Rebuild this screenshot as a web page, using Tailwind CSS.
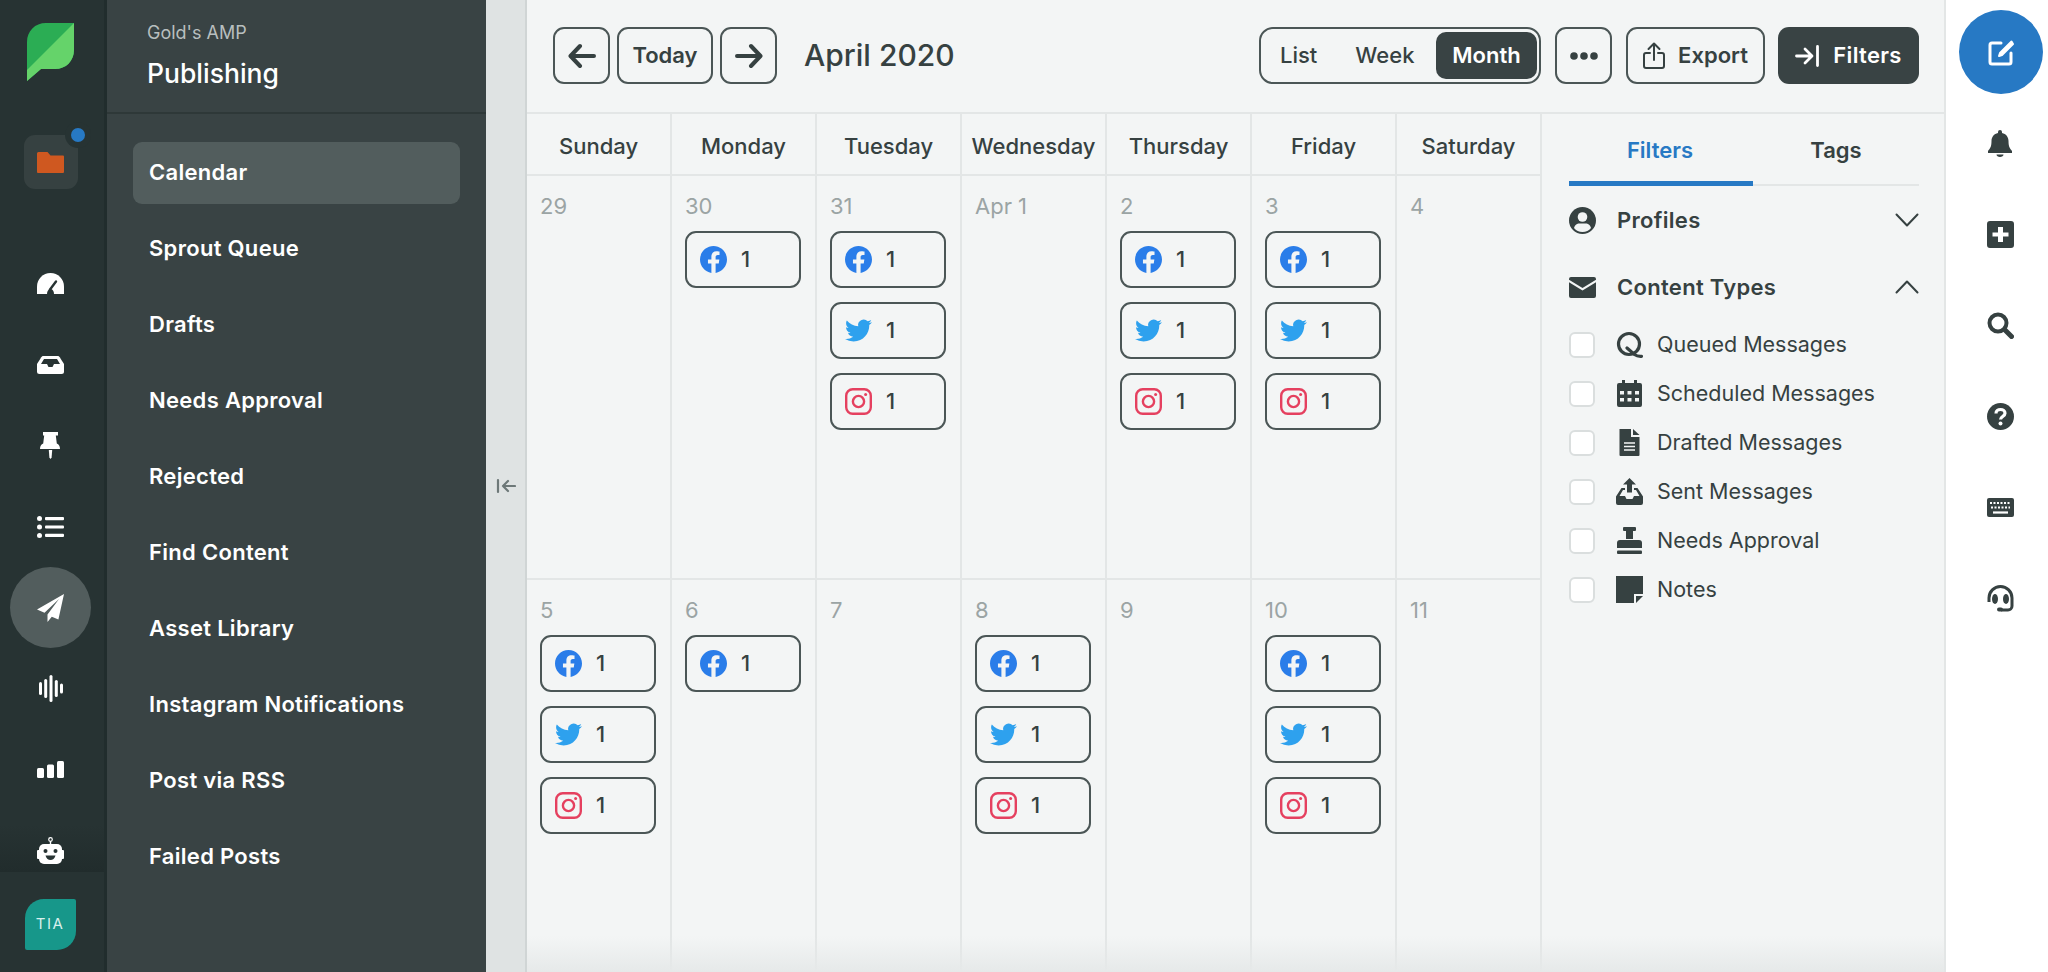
<!DOCTYPE html>
<html>
<head>
<meta charset="utf-8">
<title>Publishing</title>
<script src="https://cdn.jsdelivr.net/npm/@tailwindcss/browser@4"></script>
</head>
<body class="font-['Inter',sans-serif]">

<!-- shared icons -->
<svg class="hidden">
  <symbol id="fb" viewBox="0 0 24 24"><path fill="#2a7de9" d="M24 12.073c0-6.627-5.373-12-12-12s-12 5.373-12 12c0 5.99 4.388 10.954 10.125 11.854v-8.385H7.078v-3.47h3.047V9.43c0-3.007 1.792-4.669 4.533-4.669 1.312 0 2.686.235 2.686.235v2.953H15.83c-1.491 0-1.956.925-1.956 1.874v2.25h3.328l-.532 3.47h-2.796v8.385C19.612 23.027 24 18.062 24 12.073z"/></symbol>
  <symbol id="tw" viewBox="0 0 24 24"><path fill="#2ea1ee" d="M23.953 4.57a10 10 0 01-2.825.775 4.958 4.958 0 002.163-2.723c-.951.555-2.005.959-3.127 1.184a4.92 4.92 0 00-8.384 4.482C7.69 8.095 4.067 6.13 1.64 3.162a4.822 4.822 0 00-.666 2.475c0 1.71.87 3.213 2.188 4.096a4.904 4.904 0 01-2.228-.616v.06a4.923 4.923 0 003.946 4.827 4.996 4.996 0 01-2.212.085 4.936 4.936 0 004.604 3.417 9.867 9.867 0 01-6.102 2.105c-.39 0-.779-.023-1.17-.067a13.995 13.995 0 007.557 2.209c9.053 0 13.998-7.496 13.998-13.985 0-.21 0-.42-.015-.63A9.935 9.935 0 0024 4.59z"/></symbol>
  <symbol id="ig" viewBox="0 0 27 27"><rect x="1.2" y="1.2" width="24.6" height="24.6" rx="6.5" fill="none" stroke="#e5405f" stroke-width="2.4"/><circle cx="13.5" cy="13.5" r="5.6" fill="none" stroke="#e5405f" stroke-width="2.4"/><circle cx="20.6" cy="6.4" r="1.5" fill="#e5405f"/></symbol>
</svg>

<div class="flex h-[972px] w-[2048px] overflow-hidden bg-[#f3f5f5] text-[#364141]">

  <!-- Icon rail -->
  <div class="relative flex h-full w-[107px] shrink-0 flex-col items-center border-r-[3px] border-[#212d2d] bg-[#273333] pr-[3px]">
    <svg class="mt-[23px] h-[58px] w-[47px]" viewBox="0 0 47 58">
      <path fill="#2bad54" d="M47 0H19C8 0 0 8 0 19v39l14-12h14c11 0 19-8 19-19z"/>
      <path fill="#65d36a" d="M47 0v27c0 11-8 19-19 19H14L0 58V47z"/>
    </svg>
    <div class="relative mt-[54px] flex h-[54px] w-[54px] items-center justify-center rounded-[11px] bg-[#364141]">
      <svg class="h-[21px] w-[27px]" viewBox="0 0 27 21"><path fill="#cf5820" d="M0 1.5A1.5 1.5 0 0 1 1.5 0h9l3 3.5H26A1 1 0 0 1 27 4.500V20a1 1 0 0 1-1 1H1a1 1 0 0 1-1-1z"/></svg>
      <span class="absolute right-[-7px] top-[-7px] h-[14px] w-[14px] rounded-full bg-[#2779c4] ring-[6px] ring-[#273333]"></span>
    </div>

    <div class="mt-[54px] flex w-full flex-col items-center">
      <div class="flex h-[81px] items-center justify-center">
        <svg class="h-[21px] w-[27px]" viewBox="0 0 27 21"><path fill="#fff" d="M0 21v-7.500C0 6 6 0 13.500 0S27 6 27 13.500V21z"/><path stroke="#273333" stroke-width="2.400" stroke-linecap="round" d="M13 16.500 19 8.500"/><path fill="#273333" d="M10 21c0-3 1.500-5 3.500-5s3.500 2 3.500 5z"/></svg>
      </div>
      <div class="flex h-[81px] items-center justify-center">
        <svg class="h-[18px] w-[27px]" viewBox="0 0 27 18"><path fill="#fff" d="M6.500 0h14c1 0 1.600.4 2.200 1.200L27 8v7.500a2.500 2.500 0 0 1-2.500 2.500h-22A2.500 2.500 0 0 1 0 15.500V8l4.300-6.800C4.900.4 5.500 0 6.500 0z"/><path fill="#273333" d="M7 3h13l3 5h-6l-1.500 3h-4L10 8H4z"/></svg>
      </div>
      <div class="flex h-[81px] items-center justify-center">
        <svg class="h-[27px] w-[21px]" viewBox="0 0 21 27"><path fill="#fff" d="M3 0h15v3.500h-2.200l1 8c2 1 3.200 2.500 3.200 5.500H0c0-3 1.200-4.500 3.200-5.500l1-8H3z"/><path fill="#fff" d="M8.800 18h3.400l-.6 7.500-1.100 1.500-1.100-1.500z"/></svg>
      </div>
      <div class="flex h-[81px] items-center justify-center">
        <svg class="h-[22px] w-[27px]" viewBox="0 0 27 22" fill="#fff"><circle cx="2.500" cy="2.600" r="2.500"/><circle cx="2.500" cy="11" r="2.500"/><circle cx="2.500" cy="19.400" r="2.500"/><rect x="8" y="1" width="19" height="3.200" rx="1"/><rect x="8" y="9.400" width="19" height="3.200" rx="1"/><rect x="8" y="17.800" width="19" height="3.200" rx="1"/></svg>
      </div>
      <div class="flex h-[81px] items-center justify-center">
        <div class="flex h-[81px] w-[81px] items-center justify-center rounded-full bg-[#525d5d]">
          <svg class="h-[28px] w-[27px]" viewBox="0 0 27 28"><path fill="#fff" d="M27 0 0 15.500l7.500 3.200L22 5 10.500 20.500v.2L10.500 28l4.300-5.300 6.600 2.800z"/></svg>
        </div>
      </div>
      <div class="flex h-[81px] items-center justify-center">
        <svg class="h-[27px] w-[24px]" viewBox="0 0 24 27" fill="#fff"><rect x="0" y="7" width="3" height="13" rx="1.500"/><rect x="5.200" y="4" width="3" height="19" rx="1.500"/><rect x="10.500" y="0" width="3" height="27" rx="1.500"/><rect x="15.800" y="5" width="3" height="17" rx="1.500"/><rect x="21" y="8.500" width="3" height="10" rx="1.500"/></svg>
      </div>
      <div class="flex h-[81px] items-center justify-center">
        <svg class="h-[17px] w-[27px]" viewBox="0 0 27 17" fill="#fff"><rect x="0" y="7" width="7" height="10" rx="1.500"/><rect x="10" y="3.500" width="7" height="13.500" rx="1.500"/><rect x="20" y="0" width="7" height="17" rx="1.500"/></svg>
      </div>
      <div class="relative z-10 flex h-[81px] items-center justify-center">
        <svg class="h-[27px] w-[27px]" viewBox="0 0 27 27"><circle cx="13.500" cy="2.500" r="1.800" fill="none" stroke="#fff" stroke-width="1.200"/><path stroke="#fff" stroke-width="1.400" d="M13.500 4v3"/><rect x="2" y="7" width="23" height="20" rx="5" fill="#fff"/><rect x="0" y="13" width="3" height="9" rx="1" fill="#fff"/><rect x="24" y="13" width="3" height="9" rx="1" fill="#fff"/><circle cx="8.500" cy="14" r="2" fill="#273333"/><circle cx="18.500" cy="14" r="2" fill="#273333"/><path fill="#273333" d="M8.500 18.500h10c-.8 3-2.800 4.500-5 4.500s-4.200-1.500-5-4.500z"/></svg>
      </div>
    </div>

    <div class="absolute bottom-[100px] left-0 h-[47px] w-[104px] bg-gradient-to-b from-transparent to-[#212c2c]"></div>
    <div class="absolute bottom-0 left-0 flex h-[100px] w-[100px] items-start justify-center bg-[#273333] pt-[27px]">
      <div class="flex h-[51px] w-[51px] items-center justify-center rounded-tl-[19px] rounded-br-[19px] rounded-tr-[2px] rounded-bl-[2px] bg-[#17978a] text-[15px] tracking-[1.5px] text-[#d9f0ed]">TIA</div>
    </div>
    <div class="absolute bottom-0 left-[100px] h-[100px] w-[4px] bg-[#273333]"></div>
  </div>

  <!-- Publishing menu -->
  <div class="flex h-full w-[379px] shrink-0 flex-col bg-[#394344]">
    <div class="h-[114px] shrink-0 border-b-2 border-[#2e3838] pl-[40px] pt-[22px]">
      <div class="text-[18px] leading-[22px] text-[#b8bfbf]">Gold's AMP</div>
      <div class="mt-[14px] text-[26.500px] font-medium leading-[30px] text-white">Publishing</div>
    </div>
    <nav class="flex flex-col gap-[14px] pl-[26px] pr-[26px] pt-[28px] text-[22px] font-semibold tracking-[0.3px] text-white">
      <a class="flex h-[62px] items-center rounded-[9px] bg-[#525d5d] pb-[2px] pl-[16px]">Calendar</a>
      <a class="flex h-[62px] items-center pb-[2px] pl-[16px]">Sprout Queue</a>
      <a class="flex h-[62px] items-center pb-[2px] pl-[16px]">Drafts</a>
      <a class="flex h-[62px] items-center pb-[2px] pl-[16px]">Needs Approval</a>
      <a class="flex h-[62px] items-center pb-[2px] pl-[16px]">Rejected</a>
      <a class="flex h-[62px] items-center pb-[2px] pl-[16px]">Find Content</a>
      <a class="flex h-[62px] items-center pb-[2px] pl-[16px]">Asset Library</a>
      <a class="flex h-[62px] items-center pb-[2px] pl-[16px]">Instagram Notifications</a>
      <a class="flex h-[62px] items-center pb-[2px] pl-[16px]">Post via RSS</a>
      <a class="flex h-[62px] items-center pb-[2px] pl-[16px]">Failed Posts</a>
    </nav>
  </div>

  <!-- Collapse strip -->
  <div class="flex h-full w-[41px] shrink-0 items-center justify-center border-r-2 border-[#d0d5d5] bg-[#dfe3e3]">
    <svg class="h-[16px] w-[20px]" viewBox="0 0 20 16" fill="none" stroke="#6d7878" stroke-width="2.200" stroke-linecap="round" stroke-linejoin="round"><path d="M2 2v12M19 8H7M12 3 7 8l5 5"/></svg>
  </div>

  <!-- Main area -->
  <div class="relative flex h-full w-[1419px] shrink-0 flex-col border-r-2 border-[#e3e6e6]">
    <!-- Toolbar -->
    <div class="flex h-[114px] shrink-0 items-start border-b-2 border-[#e3e6e6] pl-[26px] pt-[27px]">
      <button class="flex h-[57px] w-[57px] items-center justify-center rounded-[11px] border-2 border-[#4b5656]">
        <svg class="h-[26px] w-[28px]" viewBox="0 0 28 26" fill="none" stroke="#364141" stroke-width="4" stroke-linecap="round" stroke-linejoin="round"><path d="M26 13H3M12 3 2.500 13 12 23"/></svg>
      </button>
      <button class="ml-[7px] flex h-[57px] w-[96px] items-center justify-center rounded-[11px] border-2 border-[#4b5656] text-[22px] font-semibold">Today</button>
      <button class="ml-[7px] flex h-[57px] w-[57px] items-center justify-center rounded-[11px] border-2 border-[#4b5656]">
        <svg class="h-[26px] w-[28px]" viewBox="0 0 28 26" fill="none" stroke="#364141" stroke-width="4" stroke-linecap="round" stroke-linejoin="round"><path d="M2 13h23M16 3l9.500 10L16 23"/></svg>
      </button>
      <div class="ml-[27px] flex h-[57px] items-center text-[30px] font-medium">April 2020</div>

      <div class="ml-auto mr-[14px] flex h-[57px] w-[282px] items-center rounded-[14px] border-2 border-[#4b5656] pl-[19px] pr-[2px] text-[22px] font-medium">
        <span>List</span>
        <span class="ml-[38px]">Week</span>
        <span class="ml-auto flex h-[47px] w-[101px] items-center justify-center rounded-[10px] bg-[#394344] font-semibold text-white">Month</span>
      </div>
      <button class="mr-[14px] flex h-[57px] w-[57px] items-center justify-center rounded-[11px] border-2 border-[#4b5656]">
        <svg class="h-[8px] w-[28px]" viewBox="0 0 28 8" fill="#364141"><circle cx="4" cy="4" r="3.800"/><circle cx="14" cy="4" r="3.800"/><circle cx="24" cy="4" r="3.800"/></svg>
      </button>
      <button class="mr-[13px] flex h-[57px] w-[139px] items-center justify-center gap-[13px] rounded-[11px] border-2 border-[#4b5656] text-[22px] font-semibold">
        <svg class="h-[27px] w-[22px]" viewBox="0 0 22 27" fill="none" stroke="#364141" stroke-width="2" stroke-linecap="round" stroke-linejoin="round"><path d="M11 18V2M5.500 7 11 1.500 16.500 7M7 11H3a2 2 0 0 0-2 2v11a2 2 0 0 0 2 2h16a2 2 0 0 0 2-2V13a2 2 0 0 0-2-2h-4"/></svg>
        Export
      </button>
      <button class="mr-[25px] flex h-[57px] w-[141px] items-center justify-center gap-[14px] rounded-[11px] bg-[#394344] text-[22px] font-semibold tracking-[0.3px] text-white">
        <svg class="h-[22px] w-[24px]" viewBox="0 0 24 22" fill="none" stroke="#fff" stroke-width="2.800" stroke-linecap="round" stroke-linejoin="round"><path d="M1.500 11H16M10 4l7 7-7 7M22.500 1.500v19"/></svg>
        Filters
      </button>
    </div>

    <div class="flex min-h-0 flex-1">
      <!-- Calendar -->
      <div class="flex w-[1015px] shrink-0 flex-col">
        <div class="grid h-[62px] shrink-0 grid-cols-[repeat(7,145px)] border-b-2 border-[#e3e6e6] text-center text-[22px] font-medium">
          <div class="flex items-center justify-center border-r-2 border-[#e3e6e6] pt-[5px]">Sunday</div>
          <div class="flex items-center justify-center border-r-2 border-[#e3e6e6] pt-[5px]">Monday</div>
          <div class="flex items-center justify-center border-r-2 border-[#e3e6e6] pt-[5px]">Tuesday</div>
          <div class="flex items-center justify-center border-r-2 border-[#e3e6e6] pt-[5px]">Wednesday</div>
          <div class="flex items-center justify-center border-r-2 border-[#e3e6e6] pt-[5px]">Thursday</div>
          <div class="flex items-center justify-center border-r-2 border-[#e3e6e6] pt-[5px]">Friday</div>
          <div class="flex items-center justify-center border-r-2 border-[#e3e6e6] pt-[5px]">Saturday</div>
        </div>

        <!-- Week 1 -->
        <div class="grid h-[404px] shrink-0 grid-cols-[repeat(7,145px)] border-b-2 border-[#e3e6e6]">
          <div class="border-r-2 border-[#e3e6e6] px-[13px] pt-[18px]"><div class="h-[24px] text-[22px] leading-[24px] text-[#9ba4a4]">29</div></div>
          <div class="border-r-2 border-[#e3e6e6] px-[13px] pt-[18px]">
            <div class="h-[24px] text-[22px] leading-[24px] text-[#9ba4a4]">30</div>
            <div class="mt-[13px] flex flex-col gap-[14px]">
              <div class="flex h-[57px] w-[116px] items-center gap-[14px] rounded-[11px] border-2 border-[#4b5656] pl-[13px] text-[22px] font-medium"><svg class="h-[27px] w-[27px]"><use href="#fb"/></svg>1</div>
            </div>
          </div>
          <div class="border-r-2 border-[#e3e6e6] px-[13px] pt-[18px]">
            <div class="h-[24px] text-[22px] leading-[24px] text-[#9ba4a4]">31</div>
            <div class="mt-[13px] flex flex-col gap-[14px]">
              <div class="flex h-[57px] w-[116px] items-center gap-[14px] rounded-[11px] border-2 border-[#4b5656] pl-[13px] text-[22px] font-medium"><svg class="h-[27px] w-[27px]"><use href="#fb"/></svg>1</div>
              <div class="flex h-[57px] w-[116px] items-center gap-[14px] rounded-[11px] border-2 border-[#4b5656] pl-[13px] text-[22px] font-medium"><svg class="h-[27px] w-[27px]"><use href="#tw"/></svg>1</div>
              <div class="flex h-[57px] w-[116px] items-center gap-[14px] rounded-[11px] border-2 border-[#4b5656] pl-[13px] text-[22px] font-medium"><svg class="h-[27px] w-[27px]"><use href="#ig"/></svg>1</div>
            </div>
          </div>
          <div class="border-r-2 border-[#e3e6e6] px-[13px] pt-[18px]"><div class="h-[24px] text-[22px] leading-[24px] text-[#9ba4a4]">Apr 1</div></div>
          <div class="border-r-2 border-[#e3e6e6] px-[13px] pt-[18px]">
            <div class="h-[24px] text-[22px] leading-[24px] text-[#9ba4a4]">2</div>
            <div class="mt-[13px] flex flex-col gap-[14px]">
              <div class="flex h-[57px] w-[116px] items-center gap-[14px] rounded-[11px] border-2 border-[#4b5656] pl-[13px] text-[22px] font-medium"><svg class="h-[27px] w-[27px]"><use href="#fb"/></svg>1</div>
              <div class="flex h-[57px] w-[116px] items-center gap-[14px] rounded-[11px] border-2 border-[#4b5656] pl-[13px] text-[22px] font-medium"><svg class="h-[27px] w-[27px]"><use href="#tw"/></svg>1</div>
              <div class="flex h-[57px] w-[116px] items-center gap-[14px] rounded-[11px] border-2 border-[#4b5656] pl-[13px] text-[22px] font-medium"><svg class="h-[27px] w-[27px]"><use href="#ig"/></svg>1</div>
            </div>
          </div>
          <div class="border-r-2 border-[#e3e6e6] px-[13px] pt-[18px]">
            <div class="h-[24px] text-[22px] leading-[24px] text-[#9ba4a4]">3</div>
            <div class="mt-[13px] flex flex-col gap-[14px]">
              <div class="flex h-[57px] w-[116px] items-center gap-[14px] rounded-[11px] border-2 border-[#4b5656] pl-[13px] text-[22px] font-medium"><svg class="h-[27px] w-[27px]"><use href="#fb"/></svg>1</div>
              <div class="flex h-[57px] w-[116px] items-center gap-[14px] rounded-[11px] border-2 border-[#4b5656] pl-[13px] text-[22px] font-medium"><svg class="h-[27px] w-[27px]"><use href="#tw"/></svg>1</div>
              <div class="flex h-[57px] w-[116px] items-center gap-[14px] rounded-[11px] border-2 border-[#4b5656] pl-[13px] text-[22px] font-medium"><svg class="h-[27px] w-[27px]"><use href="#ig"/></svg>1</div>
            </div>
          </div>
          <div class="border-r-2 border-[#e3e6e6] px-[13px] pt-[18px]"><div class="h-[24px] text-[22px] leading-[24px] text-[#9ba4a4]">4</div></div>
        </div>

        <!-- Week 2 -->
        <div class="grid min-h-0 flex-1 grid-cols-[repeat(7,145px)]">
          <div class="border-r-2 border-[#e3e6e6] px-[13px] pt-[18px]">
            <div class="h-[24px] text-[22px] leading-[24px] text-[#9ba4a4]">5</div>
            <div class="mt-[13px] flex flex-col gap-[14px]">
              <div class="flex h-[57px] w-[116px] items-center gap-[14px] rounded-[11px] border-2 border-[#4b5656] pl-[13px] text-[22px] font-medium"><svg class="h-[27px] w-[27px]"><use href="#fb"/></svg>1</div>
              <div class="flex h-[57px] w-[116px] items-center gap-[14px] rounded-[11px] border-2 border-[#4b5656] pl-[13px] text-[22px] font-medium"><svg class="h-[27px] w-[27px]"><use href="#tw"/></svg>1</div>
              <div class="flex h-[57px] w-[116px] items-center gap-[14px] rounded-[11px] border-2 border-[#4b5656] pl-[13px] text-[22px] font-medium"><svg class="h-[27px] w-[27px]"><use href="#ig"/></svg>1</div>
            </div>
          </div>
          <div class="border-r-2 border-[#e3e6e6] px-[13px] pt-[18px]">
            <div class="h-[24px] text-[22px] leading-[24px] text-[#9ba4a4]">6</div>
            <div class="mt-[13px] flex flex-col gap-[14px]">
              <div class="flex h-[57px] w-[116px] items-center gap-[14px] rounded-[11px] border-2 border-[#4b5656] pl-[13px] text-[22px] font-medium"><svg class="h-[27px] w-[27px]"><use href="#fb"/></svg>1</div>
            </div>
          </div>
          <div class="border-r-2 border-[#e3e6e6] px-[13px] pt-[18px]"><div class="h-[24px] text-[22px] leading-[24px] text-[#9ba4a4]">7</div></div>
          <div class="border-r-2 border-[#e3e6e6] px-[13px] pt-[18px]">
            <div class="h-[24px] text-[22px] leading-[24px] text-[#9ba4a4]">8</div>
            <div class="mt-[13px] flex flex-col gap-[14px]">
              <div class="flex h-[57px] w-[116px] items-center gap-[14px] rounded-[11px] border-2 border-[#4b5656] pl-[13px] text-[22px] font-medium"><svg class="h-[27px] w-[27px]"><use href="#fb"/></svg>1</div>
              <div class="flex h-[57px] w-[116px] items-center gap-[14px] rounded-[11px] border-2 border-[#4b5656] pl-[13px] text-[22px] font-medium"><svg class="h-[27px] w-[27px]"><use href="#tw"/></svg>1</div>
              <div class="flex h-[57px] w-[116px] items-center gap-[14px] rounded-[11px] border-2 border-[#4b5656] pl-[13px] text-[22px] font-medium"><svg class="h-[27px] w-[27px]"><use href="#ig"/></svg>1</div>
            </div>
          </div>
          <div class="border-r-2 border-[#e3e6e6] px-[13px] pt-[18px]"><div class="h-[24px] text-[22px] leading-[24px] text-[#9ba4a4]">9</div></div>
          <div class="border-r-2 border-[#e3e6e6] px-[13px] pt-[18px]">
            <div class="h-[24px] text-[22px] leading-[24px] text-[#9ba4a4]">10</div>
            <div class="mt-[13px] flex flex-col gap-[14px]">
              <div class="flex h-[57px] w-[116px] items-center gap-[14px] rounded-[11px] border-2 border-[#4b5656] pl-[13px] text-[22px] font-medium"><svg class="h-[27px] w-[27px]"><use href="#fb"/></svg>1</div>
              <div class="flex h-[57px] w-[116px] items-center gap-[14px] rounded-[11px] border-2 border-[#4b5656] pl-[13px] text-[22px] font-medium"><svg class="h-[27px] w-[27px]"><use href="#tw"/></svg>1</div>
              <div class="flex h-[57px] w-[116px] items-center gap-[14px] rounded-[11px] border-2 border-[#4b5656] pl-[13px] text-[22px] font-medium"><svg class="h-[27px] w-[27px]"><use href="#ig"/></svg>1</div>
            </div>
          </div>
          <div class="border-r-2 border-[#e3e6e6] px-[13px] pt-[18px]"><div class="h-[24px] text-[22px] leading-[24px] text-[#9ba4a4]">11</div></div>
        </div>
      </div>

      <!-- Filters panel -->
      <div class="flex min-w-0 flex-1 flex-col pl-[27px] pr-[25px]">
        <div class="flex h-[72px] shrink-0 border-b-2 border-[#e3e6e6] text-[22px] font-semibold">
          <div class="mb-[-2px] flex w-[184px] items-center justify-center border-b-[5px] border-[#2779c4] pr-[2px] pt-[5px] text-[#2779c4]">Filters</div>
          <div class="flex flex-1 items-center justify-center pt-[3px]">Tags</div>
        </div>
        <div class="mt-[20px] flex h-[28px] items-center text-[22px] font-semibold tracking-[0.3px]">
          <svg class="mr-[21px] h-[27px] w-[27px]" viewBox="0 0 27 27"><circle cx="13.500" cy="13.500" r="13.500" fill="#364141"/><circle cx="13.500" cy="10" r="4.800" fill="#f3f5f5"/><path fill="#f3f5f5" d="M5 21c1-3.500 3.500-4.500 5-4.500h7c1.500 0 4 1 5 4.500-2 2.500-5 4-8.500 4S7 23.500 5 21z"/></svg>
          Profiles
          <svg class="ml-auto h-[14px] w-[24px]" viewBox="0 0 24 14" fill="none" stroke="#364141" stroke-width="2" stroke-linecap="round" stroke-linejoin="round"><path d="m1.500 1.500 10.500 11 10.500-11"/></svg>
        </div>
        <div class="mt-[39px] flex h-[28px] items-center text-[22px] font-semibold tracking-[0.3px]">
          <svg class="mr-[21px] h-[21px] w-[27px]" viewBox="0 0 27 21"><path fill="#364141" d="M2 0h23a2 2 0 0 1 2 2v.8L13.500 11 0 2.800V2a2 2 0 0 1 2-2zM0 5.300l13.500 8.200L27 5.300V19a2 2 0 0 1-2 2H2a2 2 0 0 1-2-2z"/></svg>
          Content Types
          <svg class="ml-auto h-[14px] w-[24px]" viewBox="0 0 24 14" fill="none" stroke="#364141" stroke-width="2" stroke-linecap="round" stroke-linejoin="round"><path d="M1.500 12.500 12 1.500l10.500 11"/></svg>
        </div>
        <div class="mt-[19px] flex flex-col text-[21.500px]">
          <div class="flex h-[49px] items-center">
            <span class="mr-[21px] h-[26px] w-[26px] shrink-0 rounded-[6px] border-2 border-[#dadede] bg-white"></span>
            <svg class="mr-[14px] h-[27px] w-[27px] shrink-0" viewBox="0 0 27 27" fill="none" stroke="#364141" stroke-width="3.200"><circle cx="13" cy="13" r="10.500"/><path stroke-linecap="round" d="M11 17l7.500 6.500c2 1.500 4 2 7 1.800"/></svg>
            Queued Messages
          </div>
          <div class="flex h-[49px] items-center">
            <span class="mr-[21px] h-[26px] w-[26px] shrink-0 rounded-[6px] border-2 border-[#dadede] bg-white"></span>
            <svg class="mr-[14px] h-[27px] w-[27px] shrink-0" viewBox="0 0 27 27"><path fill="#364141" fill-rule="evenodd" d="M6 0h3v3h9V0h3v3h3a2 2 0 0 1 2 2v20a2 2 0 0 1-2 2H3a2 2 0 0 1-2-2V5a2 2 0 0 1 2-2h3zM4 11v3.500h4V11zm7.500 0v3.500h4V11zm7.500 0v3.500h4V11zM4 18v3.500h4V18zm7.500 0v3.500h4V18zm7.500 0v3.500h4V18z"/></svg>
            Scheduled Messages
          </div>
          <div class="flex h-[49px] items-center">
            <span class="mr-[21px] h-[26px] w-[26px] shrink-0 rounded-[6px] border-2 border-[#dadede] bg-white"></span>
            <svg class="mr-[14px] h-[27px] w-[27px] shrink-0" viewBox="0 0 27 27"><path fill="#364141" d="M3.500 0H15v8h8.500v18a1 1 0 0 1-1 1h-18a1 1 0 0 1-1-1z"/><path fill="#364141" d="M17 0l6.500 6H17z"/><path stroke="#f3f5f5" stroke-width="1.400" d="M8 14h11M8 17.500h11M8 21h11"/></svg>
            Drafted Messages
          </div>
          <div class="flex h-[49px] items-center">
            <span class="mr-[21px] h-[26px] w-[26px] shrink-0 rounded-[6px] border-2 border-[#dadede] bg-white"></span>
            <svg class="mr-[14px] h-[27px] w-[27px] shrink-0" viewBox="0 0 27 27"><path fill="#364141" d="M13.500 0 20 6.500h-4v8h-5v-8H7z"/><path fill="#364141" d="M5.500 10H9v2H7l-3.500 6H9l1.500 3h6L18 18h5.500L20 12h-2v-2h3.500L27 18.500V25a2 2 0 0 1-2 2H2a2 2 0 0 1-2-2v-6.500z"/></svg>
            Sent Messages
          </div>
          <div class="flex h-[49px] items-center">
            <span class="mr-[21px] h-[26px] w-[26px] shrink-0 rounded-[6px] border-2 border-[#dadede] bg-white"></span>
            <svg class="mr-[14px] h-[27px] w-[27px] shrink-0" viewBox="0 0 27 27" fill="#364141"><rect x="7" y="0" width="13" height="4" rx="1"/><rect x="10" y="4" width="7" height="8"/><path d="M4 13h19a3 3 0 0 1 3 3v5H1v-5a3 3 0 0 1 3-3z"/><rect x="1" y="23.500" width="25" height="3.500" rx="1"/></svg>
            Needs Approval
          </div>
          <div class="flex h-[49px] items-center">
            <span class="mr-[21px] h-[26px] w-[26px] shrink-0 rounded-[6px] border-2 border-[#dadede] bg-white"></span>
            <svg class="mr-[14px] h-[27px] w-[27px] shrink-0" viewBox="0 0 27 27" fill="#364141"><path d="M0 0h27v18h-9v9H0z"/><path d="M20 20h7l-7 7z"/></svg>
            Notes
          </div>
        </div>
      </div>
    </div>

    <div class="pointer-events-none absolute bottom-0 left-0 h-[36px] w-full bg-gradient-to-b from-transparent to-[#e6e9e9]"></div>
  </div>

  <!-- Right rail -->
  <div class="flex h-full flex-1 flex-col items-center bg-white">
    <div class="mr-[-8px] mt-[10px] flex h-[84px] w-[84px] shrink-0 items-center justify-center rounded-full bg-[#2779c4]">
      <svg class="h-[27px] w-[27px]" viewBox="0 0 27 27" fill="none" stroke="#fff" stroke-width="3" stroke-linecap="round" stroke-linejoin="round"><path d="M13 4H4a2 2 0 0 0-2 2v17a2 2 0 0 0 2 2h17a2 2 0 0 0 2-2v-9"/><path d="M23.500 2.500 12 14l-1 3 3-1L25 5z" fill="#fff" stroke-width="2"/></svg>
    </div>
    <div class="mt-[4px] flex flex-col items-center pl-[6px]">
      <div class="flex h-[91px] items-center justify-center">
        <svg class="h-[27px] w-[24px]" viewBox="0 0 24 27" fill="#364141"><path d="M12 0a2 2 0 0 1 2 2v1c4 .8 6.500 4 6.500 8 0 6 1.500 7.500 3.500 10v2H0v-2c2-2.500 3.500-4 3.500-10 0-4 2.500-7.200 6.500-8V2a2 2 0 0 1 2-2z"/><path d="M8.500 24.500h7c0 1.500-1.500 2.500-3.500 2.500s-3.500-1-3.500-2.500z"/></svg>
      </div>
      <div class="flex h-[91px] items-center justify-center">
        <svg class="h-[27px] w-[27px]" viewBox="0 0 27 27"><path fill="#364141" fill-rule="evenodd" d="M3 0h21a3 3 0 0 1 3 3v21a3 3 0 0 1-3 3H3a3 3 0 0 1-3-3V3a3 3 0 0 1 3-3zm8 6v5.500H5.500v4H11V21h5v-5.500h5.500v-4H16V6z"/></svg>
      </div>
      <div class="flex h-[91px] items-center justify-center">
        <svg class="h-[27px] w-[27px]" viewBox="0 0 27 27" fill="none" stroke="#364141"><circle cx="11" cy="11" r="8.500" stroke-width="4"/><path stroke-width="5" stroke-linecap="round" d="m18 18 6.500 6.500"/></svg>
      </div>
      <div class="flex h-[91px] items-center justify-center">
        <svg class="h-[27px] w-[27px]" viewBox="0 0 27 27"><circle cx="13.500" cy="13.500" r="13.500" fill="#364141"/><path fill="none" stroke="#fff" stroke-width="3.200" d="M9 10.500c0-2.500 2-4 4.500-4s4.500 1.500 4.500 3.800c0 3.200-4.500 3.200-4.500 6.200"/><circle cx="13.500" cy="20.500" r="2" fill="#fff"/></svg>
      </div>
      <div class="flex h-[91px] items-center justify-center">
        <svg class="h-[19px] w-[27px]" viewBox="0 0 27 19"><rect width="27" height="19" rx="2" fill="#364141"/><path stroke="#fff" stroke-width="2" stroke-dasharray="2 1.500" d="M3 5h21M4 9.500h19"/><path stroke="#fff" stroke-width="2.200" d="M6 14.500h15"/></svg>
      </div>
      <div class="flex h-[91px] items-center justify-center">
        <svg class="h-[27px] w-[27px]" viewBox="0 0 27 27" fill="none" stroke="#364141"><path stroke-width="3" d="M2 17v-4a11.500 11.500 0 0 1 23 0v8c0 2.500-2 4-4 4h-7"/><ellipse cx="8" cy="14" rx="3" ry="5" fill="#364141" stroke="none"/><ellipse cx="19" cy="14" rx="3" ry="5" fill="#364141" stroke="none"/><rect x="10" y="22.500" width="6" height="4" rx="2" fill="#364141" stroke="none"/></svg>
      </div>
    </div>
  </div>

</div>
</body>
</html>
